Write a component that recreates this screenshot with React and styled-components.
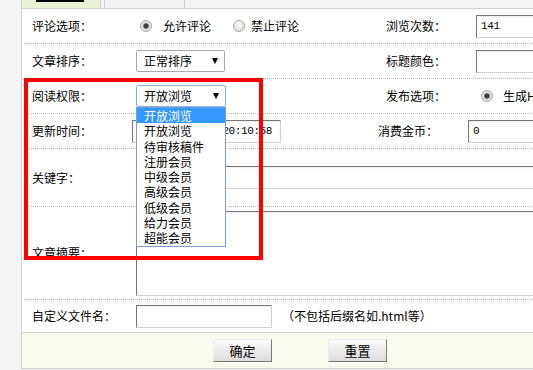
import React from 'react';
import styled, { createGlobalStyle } from 'styled-components';

const Global = createGlobalStyle`
  html, body { margin: 0; padding: 0; background: #f4f4f4; overflow: hidden; }
  body {
    font-family: "Noto Sans CJK SC", "Liberation Sans", sans-serif;
    font-size: 12px;
    color: #000;
  }
`;

const Page = styled.div`
  position: relative;
  width: 533px;
  height: 370px;
  overflow: hidden;
  padding-left: 21px;
  box-sizing: border-box;
  background: #f4f4f4;
`;

const Panel = styled.div`
  width: 620px;
  border-left: 1px solid #d0d0d0;
  background: #fff;
`;

const TabBar = styled.div`
  display: flex;
  height: 9px;
  box-sizing: border-box;
  border-bottom: 1px solid #cfcfcf;
  background: #f4f4f4;
  overflow: hidden;
`;

const Tab = styled.div`
  flex: none;
  width: ${p => p.$w}px;
  margin-left: ${p => p.$ml || 0}px;
  height: 8px;
  box-sizing: border-box;
  overflow: hidden;
  padding-left: ${p => p.$pl}px;
  background: ${p => (p.$active ? '#e6f2d3' : '#f3f3f3')};
  border-right: 1px solid #cfcfcf;
  border-left: ${p => (p.$active ? 'none' : '1px solid #cfcfcf')};
`;

const TabText = styled.span`
  display: block;
  margin-top: -14px;
  line-height: 14px;
  white-space: nowrap;
  color: ${p => (p.$active ? '#000' : '#555')};
  text-decoration: ${p => (p.$active ? 'underline' : 'none')};
  text-decoration-thickness: 2px;
  text-underline-offset: 2px;
  font-weight: ${p => (p.$active ? 'bold' : 'normal')};
`;

const Row = styled.div`
  display: flex;
  align-items: center;
  height: ${p => p.$h}px;
  box-sizing: border-box;
  margin-left: 2px;
  border-bottom: ${p => (p.$plain ? 'none' : '1px dotted #b4b4b4')};
`;

const Label = styled.div`
  flex: none;
  width: ${p => p.$w ?? 112}px;
  padding-left: ${p => p.$pl ?? 8}px;
  box-sizing: border-box;
  white-space: nowrap;
  line-height: 14px;
`;

const Field = styled.div`
  flex: none;
  width: ${p => (p.$w ? `${p.$w}px` : 'auto')};
  display: flex;
  align-items: center;
  position: relative;
`;

const Radio = styled.span`
  flex: none;
  width: 12px;
  height: 12px;
  margin-left: ${p => p.$ml || 0}px;
  border-radius: 50%;
  box-sizing: border-box;
  border: 1px solid #a8a8a8;
  background: ${p =>
    p.$checked
      ? 'radial-gradient(circle, #3c3c3c 0 2px, #8a8a8a 2.6px, #dcdcdc 3.4px, #f2f2f2 100%)'
      : 'radial-gradient(circle at 50% 35%, #fbfbfb, #d4d4d4)'};
`;

const Opt = styled.span`
  margin-left: ${p => p.$ml || 0}px;
  white-space: nowrap;
  line-height: 14px;
`;

const TextInput = styled.input`
  box-sizing: border-box;
  flex: none;
  width: ${p => p.$w}px;
  height: 23px;
  margin: 0;
  padding: ${p => (p.$right ? '0 8px 0 4px' : '0 4px')};
  border: 1px solid;
  border-color: #767676 #d2d2d2 #d2d2d2 #767676;
  box-shadow: inset 0 1px 2px rgba(0, 0, 0, 0.08);
  font-family: "Liberation Mono", monospace;
  font-size: 11px;
  letter-spacing: -0.4px;
  color: #000;
  background: #fff;
  outline: none;
  text-align: ${p => (p.$right ? 'right' : 'left')};
`;

const TextArea = styled.textarea`
  box-sizing: border-box;
  flex: none;
  width: 420px;
  height: 85px;
  margin: 0;
  padding: 2px 4px;
  resize: none;
  border: 1px solid;
  border-color: #767676 #d2d2d2 #d2d2d2 #767676;
  box-shadow: inset 0 1px 2px rgba(0, 0, 0, 0.08);
  background: #fff;
  outline: none;
`;

const Select = styled.div`
  flex: none;
  position: relative;
  box-sizing: border-box;
  width: ${p => p.$w}px;
  height: 22px;
  border: 1px solid ${p => (p.$focus ? '#7eb4ea' : '#a9a9a9')};
  border-radius: 2px;
  padding: 0 6px 0 7px;
  display: flex;
  align-items: center;
  background: #fff;
  line-height: 14px;
  white-space: nowrap;
`;

const Arrow = styled.span`
  margin-left: auto;
  width: 0;
  height: 0;
  border-left: 3.5px solid transparent;
  border-right: 3.5px solid transparent;
  border-top: 6px solid #000;
`;

const DropList = styled.ul`
  position: absolute;
  top: calc(100% + 1px);
  left: -1px;
  width: 90px;
  box-sizing: border-box;
  margin: 0;
  padding: 0;
  list-style: none;
  border: 1px solid #7c9cd3;
  background: #fff;
  z-index: 5;
`;

const DropItem = styled.li`
  height: 15.3px;
  line-height: 15.3px;
  padding-left: 7px;
  white-space: nowrap;
  background: ${p => (p.$hi ? '#3399ff' : 'transparent')};
  color: ${p => (p.$hi ? '#fff' : '#000')};
`;

const Note = styled.span`
  margin-left: 10px;
  white-space: nowrap;
  line-height: 14px;
`;

const Footer = styled.div`
  display: flex;
  align-items: center;
  gap: 56px;
  height: 37px;
  box-sizing: border-box;
  padding-left: 191px;
  background: #f9fbef;
  border-top: 1px solid #cfcfcf;
  border-bottom: 1px solid #cfcfcf;
`;

const Button = styled.button`
  width: 59px;
  height: 23px;
  margin: 0;
  padding: 0;
  font-family: "Noto Sans CJK SC", sans-serif;
  font-size: 13px;
  line-height: 14px;
  color: #000;
  background: linear-gradient(#fbfbfb, #dcdcdc);
  border: 1px solid;
  border-color: #ececec #7a7a7a #7a7a7a #ececec;
`;

const Highlight = styled.div`
  position: absolute;
  left: 24px;
  top: 78px;
  width: 239px;
  height: 182px;
  box-sizing: border-box;
  border: 4px solid #ff0000;
  pointer-events: none;
  z-index: 10;
`;

const levels = ['开放浏览', '开放浏览', '待审核稿件', '注册会员', '中级会员', '高级会员', '低级会员', '给力会员', '超能会员'];

export default function App() {
  return (
    <>
      <Global />
      <Page>
        <Panel>
          <TabBar>
            <Tab $active $w={79} $pl={14}>
              <TabText $active>基本参数</TabText>
            </Tab>
            <Tab $w={81} $ml={3} $pl={16}>
              <TabText>高级参数</TabText>
            </Tab>
          </TabBar>

          <Row $h={35}>
            <Label>评论选项：</Label>
            <Field $w={250}>
              <Radio $checked $ml={4} />
              <Opt $ml={11}>允许评论</Opt>
              <Radio $ml={22} />
              <Opt $ml={6}>禁止评论</Opt>
            </Field>
            <Label $w={90} $pl={0}>浏览次数：</Label>
            <TextInput $w={120} defaultValue="141" readOnly />
          </Row>

          <Row $h={35}>
            <Label>文章排序：</Label>
            <Field $w={250}>
              <Select $w={89}>
                正常排序
                <Arrow />
              </Select>
            </Field>
            <Label $w={90} $pl={0}>标题颜色：</Label>
            <TextInput $w={120} defaultValue="" readOnly />
          </Row>

          <Row $h={35}>
            <Label>阅读权限：</Label>
            <Field $w={250}>
              <Select $w={90} $focus>
                开放浏览
                <Arrow />
                <DropList>
                  {levels.map((l, i) => (
                    <DropItem key={i} $hi={i === 0}>{l}</DropItem>
                  ))}
                </DropList>
              </Select>
            </Field>
            <Label $w={90} $pl={0}>发布选项：</Label>
            <Field>
              <Radio $checked $ml={5} />
              <Opt $ml={10}>生成HTML</Opt>
            </Field>
          </Row>

          <Row $h={35}>
            <Label $w={108}>更新时间：</Label>
            <Field $w={246}>
              <TextInput $w={149} $right defaultValue="2020-12-19 20:10:58" readOnly />
            </Field>
            <Label $w={90} $pl={0}>消费金币：</Label>
            <TextInput $w={120} defaultValue="0" readOnly />
          </Row>

          <Row $h={58}>
            <Label>关键字：</Label>
            <TextInput $w={420} defaultValue="" readOnly />
          </Row>

          <Row $h={93}>
            <Label>文章摘要：</Label>
            <TextArea readOnly defaultValue="" />
          </Row>

          <Row $h={32} $plain>
            <Label>自定义文件名：</Label>
            <TextInput $w={136} defaultValue="" readOnly />
            <Note>（不包括后缀名如.html等）</Note>
          </Row>

          <Footer>
            <Button type="button">确定</Button>
            <Button type="button">重置</Button>
          </Footer>
        </Panel>
        <Highlight />
      </Page>
    </>
  );
}
